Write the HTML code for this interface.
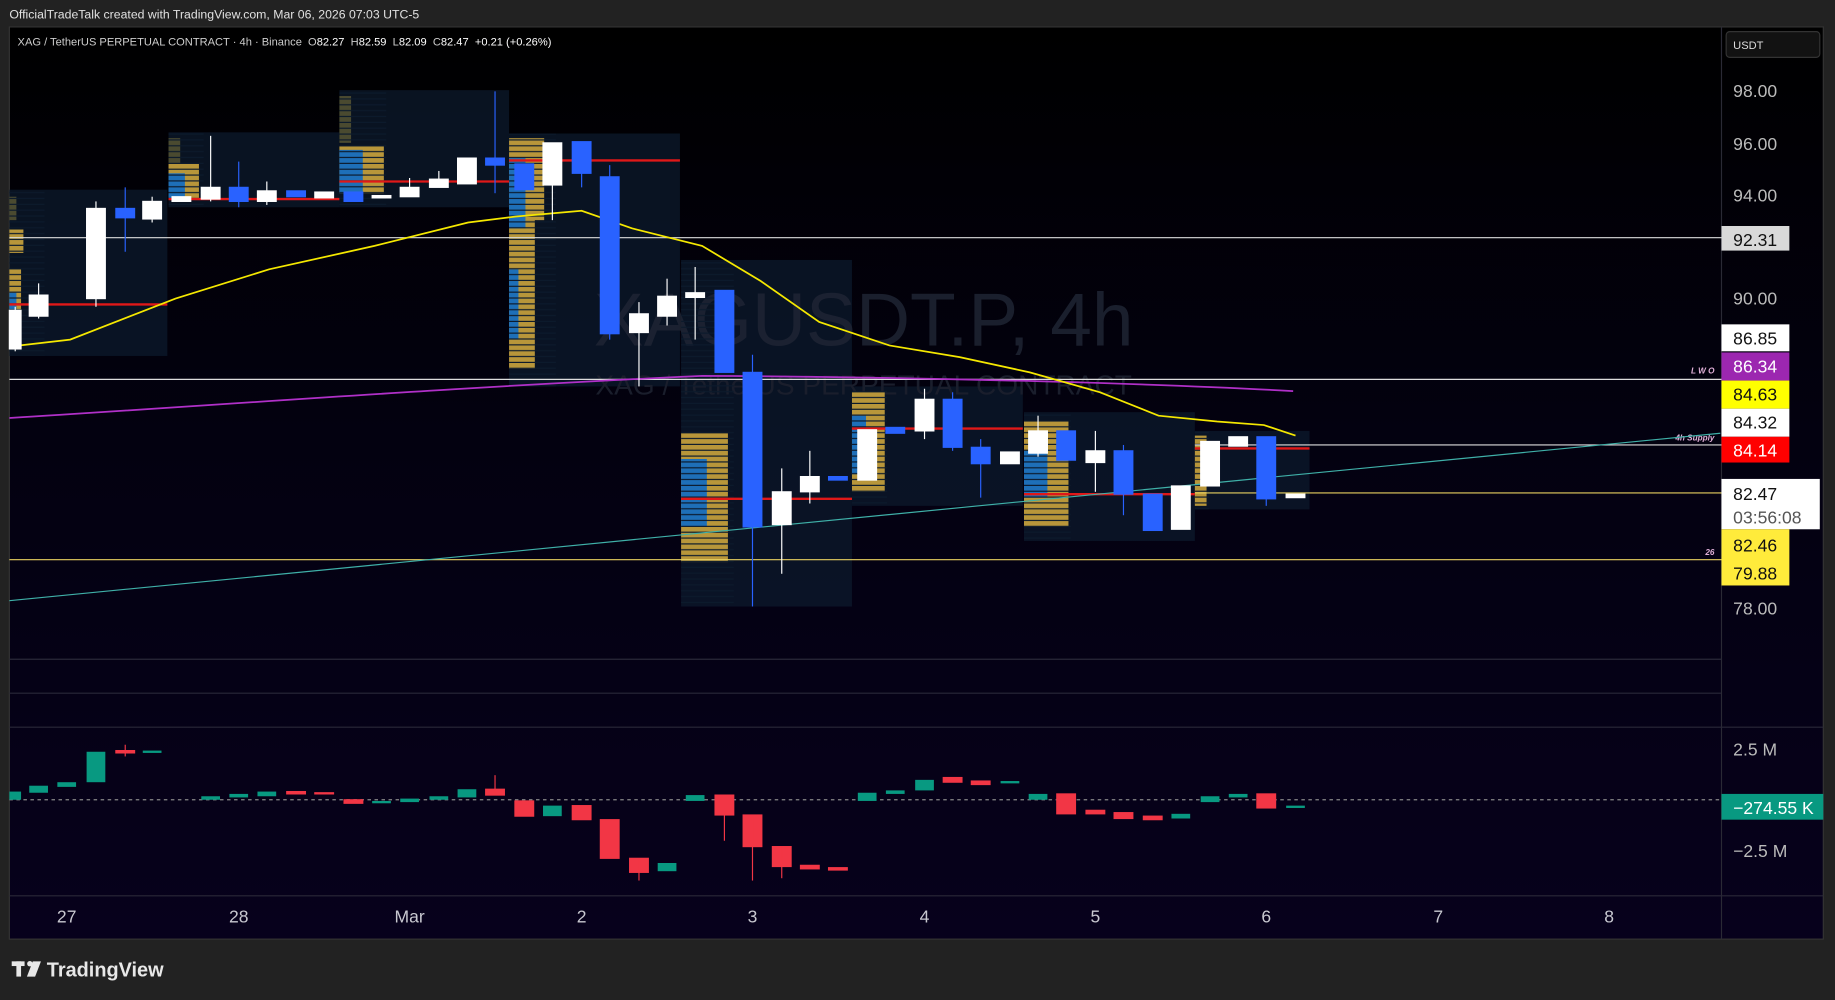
<!DOCTYPE html>
<html><head><meta charset="utf-8"><style>
html,body{margin:0;padding:0;background:#222;width:1835px;height:1000px;overflow:hidden}
svg{display:block}
text{font-family:"Liberation Sans",sans-serif}
</style></head><body>
<svg width="1835" height="1000" viewBox="0 0 1568 854" preserveAspectRatio="none" xmlns="http://www.w3.org/2000/svg">
<defs>
<linearGradient id="bg" x1="0" y1="0" x2="0" y2="1">
<stop offset="0" stop-color="#000000"/><stop offset="0.45" stop-color="#030110"/><stop offset="1" stop-color="#07011c"/>
</linearGradient>
<pattern id="stripe" width="10" height="5" patternUnits="userSpaceOnUse">
<rect y="4" width="10" height="1" fill="#0c1a2c"/>
</pattern>
</defs>
<rect width="1568" height="854" fill="#222"/>
<text x="8" y="16" font-size="10.5" fill="#e0e0e0">OfficialTradeTalk created with TradingView.com, Mar 06, 2026 07:03 UTC-5</text>
<rect x="8" y="23" width="1550" height="779" fill="url(#bg)" stroke="#333" stroke-width="1"/>
<line x1="1471" y1="23" x2="1471" y2="802" stroke="#2a2a35"/>
<line x1="8" y1="563" x2="1471" y2="563" stroke="#2a2838"/>
<line x1="8" y1="592" x2="1471" y2="592" stroke="#2a2838"/>
<line x1="8" y1="621" x2="1558" y2="621" stroke="#2a2838"/>
<line x1="8" y1="765" x2="1558" y2="765" stroke="#2a2838"/>

<!-- profile boxes -->
<g fill="#0c1a2c" fill-opacity="0.75">
<rect x="8" y="162" width="135" height="142"/>
<rect x="144" y="113" width="146" height="64"/>
<rect x="290" y="77" width="145" height="100"/>
<rect x="435" y="114" width="146" height="216"/>
<rect x="582" y="222" width="146" height="296"/>
<rect x="728" y="330" width="146" height="102"/>
<rect x="875" y="352" width="146" height="110"/>
<rect x="1021" y="368" width="98" height="67"/>
</g>
<!-- watermark -->
<text x="738" y="295" font-size="64" fill="#1f2434" fill-opacity="0.85" text-anchor="middle">XAGUSDT.P, 4h</text>
<text x="738" y="337" font-size="24" fill="#1a1e2c" text-anchor="middle">XAG / TetherUS PERPETUAL CONTRACT</text>

<!-- profile bars -->
<g fill="#b8963a">
<rect x="8" y="168" width="6" height="20" fill="#4a4a30"/><rect x="8" y="196" width="12" height="20"/><rect x="8" y="230" width="10" height="40"/>
<rect x="144" y="118" width="10" height="22" fill="#4a4a30"/><rect x="144" y="140" width="26" height="30"/>
<rect x="290" y="82" width="10" height="40" fill="#4a4a30"/><rect x="290" y="125" width="38" height="40"/>
<rect x="435" y="118" width="30" height="70"/><rect x="435" y="188" width="22" height="127"/>
<rect x="582" y="370" width="40" height="110"/>
<rect x="728" y="335" width="28" height="85"/>
<rect x="875" y="360" width="38" height="90"/>
<rect x="1021" y="372" width="10" height="60"/>
</g>
<g fill="#1e6fb8">
<rect x="8" y="250" width="6" height="20"/>
<rect x="144" y="148" width="14" height="22"/>
<rect x="290" y="128" width="20" height="37"/>
<rect x="435" y="135" width="14" height="60"/><rect x="435" y="230" width="8" height="60"/>
<rect x="582" y="392" width="22" height="58"/>
<rect x="728" y="355" width="12" height="50"/>
<rect x="875" y="385" width="20" height="40"/>
</g>
<g fill="url(#stripe)">
<rect x="8" y="162" width="30" height="142"/><rect x="144" y="113" width="30" height="64"/>
<rect x="290" y="77" width="40" height="100"/><rect x="435" y="114" width="40" height="216"/>
<rect x="582" y="222" width="45" height="296"/><rect x="728" y="330" width="30" height="102"/>
<rect x="875" y="352" width="40" height="110"/><rect x="1021" y="368" width="12" height="67"/>
</g>
<!-- POC lines -->
<g stroke="#e01818" stroke-width="2">
<line x1="8" y1="260" x2="143" y2="260"/><line x1="144" y1="170" x2="290" y2="170"/>
<line x1="290" y1="155" x2="435" y2="155"/><line x1="435" y1="137" x2="581" y2="137"/>
<line x1="582" y1="426" x2="728" y2="426"/><line x1="728" y1="366" x2="874" y2="366"/>
<line x1="875" y1="422" x2="1021" y2="422"/><line x1="1021" y1="383" x2="1119" y2="383"/>
</g>

<!-- horizontal levels -->
<line x1="8" y1="203" x2="1471" y2="203" stroke="#ddd" stroke-width="1"/>
<line x1="8" y1="324" x2="1471" y2="324" stroke="#ddd" stroke-width="1"/>
<line x1="1021" y1="380" x2="1471" y2="380" stroke="#ddd" stroke-width="1"/>
<line x1="1021" y1="421" x2="1471" y2="421" stroke="#e8d060" stroke-width="1"/>
<line x1="8" y1="478" x2="1471" y2="478" stroke="#e8d060" stroke-width="1"/>
<text x="1465" y="319" font-size="7" fill="#e0b0d8" text-anchor="end" font-style="italic" font-weight="bold">L W O</text>
<text x="1465" y="376" font-size="7" fill="#e0b0d8" text-anchor="end" font-style="italic" font-weight="bold">4h Supply</text>
<text x="1465" y="474" font-size="7" fill="#e0b0d8" text-anchor="end" font-style="italic" font-weight="bold">26</text>

<!-- MAs -->
<path d="M8,357 C200,345 400,330 600,321 C800,322 1000,328 1105,334" fill="none" stroke="#b030c8" stroke-width="1.5"/>
<polyline points="8,296 60,290 150,255 230,230 320,210 400,190 440,185 497,180 540,195 600,210 650,240 700,275 760,295 820,305 880,318 940,335 990,355 1040,360 1080,363 1107,372" fill="none" stroke="#f5e800" stroke-width="1.5"/>
<line x1="8" y1="513" x2="1470" y2="370" stroke="#3fb0a8" stroke-width="1"/>

<!-- candles -->
<g stroke-width="1">
<g stroke="#fff" fill="#fff">
<line x1="13" y1="262" x2="13" y2="300"/><rect x="8" y="265" width="10" height="33"/>
<line x1="33" y1="242" x2="33" y2="272"/><rect x="25" y="252" width="16" height="18"/>
<line x1="82" y1="172" x2="82" y2="262"/><rect x="74" y="178" width="16" height="77"/>
<line x1="130" y1="168" x2="130" y2="190"/><rect x="122" y="172" width="16" height="15"/>
<rect x="147" y="168" width="16" height="4"/>
<line x1="180" y1="116" x2="180" y2="172"/><rect x="172" y="160" width="16" height="10"/>
<line x1="228" y1="155" x2="228" y2="175"/><rect x="220" y="163" width="16" height="9"/>
<rect x="269" y="164" width="16" height="5"/>
<rect x="318" y="167" width="16" height="2"/>
<line x1="350" y1="152" x2="350" y2="168"/><rect x="342" y="160" width="16" height="8"/>
<line x1="375" y1="146" x2="375" y2="160"/><rect x="367" y="153" width="16" height="7"/>
<rect x="391" y="135" width="16" height="22"/>
<line x1="472" y1="122" x2="472" y2="188"/><rect x="464" y="122" width="16" height="36"/>
<line x1="546" y1="258" x2="546" y2="330"/><rect x="538" y="268" width="16" height="16"/>
<line x1="570" y1="238" x2="570" y2="278"/><rect x="562" y="253" width="16" height="17"/>
<line x1="594" y1="228" x2="594" y2="290"/><rect x="586" y="250" width="16" height="4"/>
<line x1="668" y1="400" x2="668" y2="490"/><rect x="660" y="420" width="16" height="28"/>
<line x1="692" y1="385" x2="692" y2="430"/><rect x="684" y="407" width="16" height="13"/>
<rect x="733" y="367" width="16" height="43"/>
<line x1="790" y1="332" x2="790" y2="375"/><rect x="782" y="341" width="16" height="27"/>
<rect x="855" y="386" width="16" height="10"/>
<line x1="887" y1="355" x2="887" y2="390"/><rect x="879" y="368" width="16" height="19"/>
<line x1="936" y1="368" x2="936" y2="420"/><rect x="928" y="385" width="16" height="10"/>
<rect x="1001" y="415" width="16" height="37"/>
<rect x="1026" y="377" width="16" height="38"/>
<rect x="1050" y="373" width="16" height="8"/>
<rect x="1099" y="422" width="16" height="3"/>
</g>
<g stroke="#2962ff" fill="#2962ff">
<line x1="107" y1="160" x2="107" y2="215"/><rect x="99" y="178" width="16" height="8"/>
<line x1="204" y1="138" x2="204" y2="177"/><rect x="196" y="160" width="16" height="12"/>
<rect x="245" y="163" width="16" height="5"/>
<rect x="294" y="164" width="16" height="8"/>
<line x1="423" y1="78" x2="423" y2="165"/><rect x="415" y="135" width="16" height="6"/>
<rect x="440" y="140" width="16" height="22"/>
<line x1="497" y1="121" x2="497" y2="160"/><rect x="489" y="121" width="16" height="27"/>
<line x1="521" y1="141" x2="521" y2="290"/><rect x="513" y="151" width="16" height="134"/>
<rect x="611" y="248" width="16" height="70"/>
<line x1="643" y1="303" x2="643" y2="518"/><rect x="635" y="318" width="16" height="132"/>
<rect x="708" y="407" width="16" height="3"/>
<rect x="757" y="365" width="16" height="5"/>
<line x1="814" y1="335" x2="814" y2="385"/><rect x="806" y="341" width="16" height="41"/>
<line x1="838" y1="375" x2="838" y2="425"/><rect x="830" y="382" width="16" height="14"/>
<rect x="903" y="368" width="16" height="25"/>
<line x1="960" y1="380" x2="960" y2="440"/><rect x="952" y="385" width="16" height="37"/>
<rect x="977" y="422" width="16" height="31"/>
<line x1="1082" y1="373" x2="1082" y2="432"/><rect x="1074" y="373" width="16" height="53"/>
</g>
</g>

<!-- oscillator pane -->
<line x1="8" y1="683" x2="1471" y2="683" stroke="#888" stroke-dasharray="3,3" stroke-width="1"/>
<g fill="#089981">
<rect x="8" y="676" width="10" height="7"/><rect x="25" y="671" width="16" height="6"/><rect x="49" y="668" width="16" height="4"/>
<rect x="74" y="642" width="16" height="26"/><rect x="122" y="641" width="16" height="2"/>
<rect x="172" y="680" width="16" height="3"/><rect x="196" y="678" width="16" height="3"/><rect x="220" y="676" width="16" height="4"/>
<rect x="318" y="684" width="16" height="2"/><rect x="342" y="682" width="16" height="3"/><rect x="367" y="680" width="16" height="3"/>
<rect x="391" y="674" width="16" height="7"/><rect x="464" y="688" width="16" height="9"/><rect x="562" y="737" width="16" height="7"/>
<rect x="586" y="679" width="16" height="5"/><rect x="733" y="677" width="16" height="7"/><rect x="757" y="675" width="16" height="3"/>
<rect x="782" y="666" width="16" height="9"/><rect x="855" y="667" width="16" height="2"/><rect x="879" y="678" width="16" height="5"/>
<rect x="1001" y="695" width="16" height="4"/><rect x="1026" y="680" width="16" height="5"/><rect x="1050" y="678" width="16" height="3"/>
<rect x="1099" y="688" width="16" height="2"/>
</g>
<g fill="#f23645" stroke="#f23645">
<rect x="99" y="641" width="16" height="2"/><line x1="107" y1="636" x2="107" y2="646"/>
<rect x="245" y="676" width="16" height="2"/><rect x="269" y="677" width="16" height="1"/><rect x="294" y="683" width="16" height="3"/>
<rect x="415" y="674" width="16" height="5"/><line x1="423" y1="662" x2="423" y2="679"/>
<rect x="440" y="684" width="16" height="13"/><rect x="489" y="688" width="16" height="12"/>
<rect x="513" y="700" width="16" height="33"/><rect x="538" y="733" width="16" height="12"/><line x1="546" y1="733" x2="546" y2="752"/>
<rect x="611" y="679" width="16" height="17"/><line x1="619" y1="679" x2="619" y2="718"/>
<rect x="635" y="696" width="16" height="27"/><line x1="643" y1="696" x2="643" y2="752"/>
<rect x="660" y="723" width="16" height="17"/><line x1="668" y1="723" x2="668" y2="750"/>
<rect x="684" y="739" width="16" height="3"/><rect x="708" y="741" width="16" height="2"/>
<rect x="806" y="664" width="16" height="4"/><rect x="830" y="667" width="16" height="3"/>
<rect x="903" y="678" width="16" height="17"/><rect x="928" y="692" width="16" height="3"/><rect x="952" y="694" width="16" height="5"/>
<rect x="977" y="697" width="16" height="3"/><rect x="1074" y="678" width="16" height="12"/>
</g>

<!-- price axis -->
<rect x="1475" y="27" width="80" height="22" rx="3" fill="#121212" stroke="#333"/>
<text x="1481" y="42" font-size="9.5" fill="#ddd">USDT</text>
<g font-size="15" fill="#bbb" font-family="Liberation Sans,sans-serif">
<text x="1481" y="83">98.00</text><text x="1481" y="128">96.00</text><text x="1481" y="172">94.00</text>
<text x="1481" y="260">90.00</text><text x="1481" y="525">78.00</text>
</g>
<g font-size="15">
<rect x="1471" y="193" width="58" height="21" fill="#d9d9d9"/><text x="1481" y="210" fill="#111">92.31</text>
<rect x="1471" y="277" width="58" height="23" fill="#fff"/><text x="1481" y="294" fill="#111">86.85</text>
<rect x="1471" y="301" width="58" height="24" fill="#9c27b0"/><text x="1481" y="318" fill="#fff">86.34</text>
<rect x="1471" y="325" width="58" height="24" fill="#ffff00"/><text x="1481" y="342" fill="#111">84.63</text>
<rect x="1471" y="349" width="58" height="24" fill="#fff"/><text x="1481" y="366" fill="#111">84.32</text>
<rect x="1471" y="373" width="58" height="22" fill="#ff0000"/><text x="1481" y="390" fill="#fff">84.14</text>
<rect x="1471" y="409" width="84" height="43" fill="#fff"/><text x="1481" y="427" fill="#111">82.47</text><text x="1481" y="447" fill="#555">03:56:08</text>
<rect x="1471" y="452" width="58" height="48" fill="#ffeb3b"/><text x="1481" y="471" fill="#111">82.46</text><text x="1481" y="495" fill="#111">79.88</text>
<text x="1481" y="645" fill="#bbb">2.5 M</text>
<rect x="1471" y="678" width="87" height="22" fill="#089981"/><text x="1481" y="695" fill="#fff">−274.55 K</text>
<text x="1481" y="732" fill="#bbb">−2.5 M</text>
</g>

<!-- top legend -->
<text x="15" y="39" font-size="9.5" fill="#ccc" xml:space="preserve">XAG / TetherUS PERPETUAL CONTRACT · 4h · Binance  O<tspan fill="#fff">82.27</tspan>  H<tspan fill="#fff">82.59</tspan>  L<tspan fill="#fff">82.09</tspan>  C<tspan fill="#fff">82.47</tspan>  <tspan fill="#fff">+0.21 (+0.26%)</tspan></text>

<!-- time axis -->
<g font-size="15" fill="#c8c8d0" text-anchor="middle">
<text x="57" y="788">27</text><text x="204" y="788">28</text><text x="350" y="788">Mar</text><text x="497" y="788">2</text>
<text x="643" y="788">3</text><text x="790" y="788">4</text><text x="936" y="788">5</text><text x="1082" y="788">6</text>
<text x="1229" y="788">7</text><text x="1375" y="788">8</text>
</g>

<!-- logo -->
<g fill="#e8e8e8">
<rect x="10" y="821" width="11" height="4"/><rect x="14" y="821" width="4" height="13"/>
<circle cx="25.5" cy="823" r="2.3"/><path d="M28,821 L35,821 L30,834 L23,834 Z"/>
</g>
<text x="40" y="834" font-size="17" font-weight="bold" fill="#e8e8e8">TradingView</text>
</svg>
</body></html>
